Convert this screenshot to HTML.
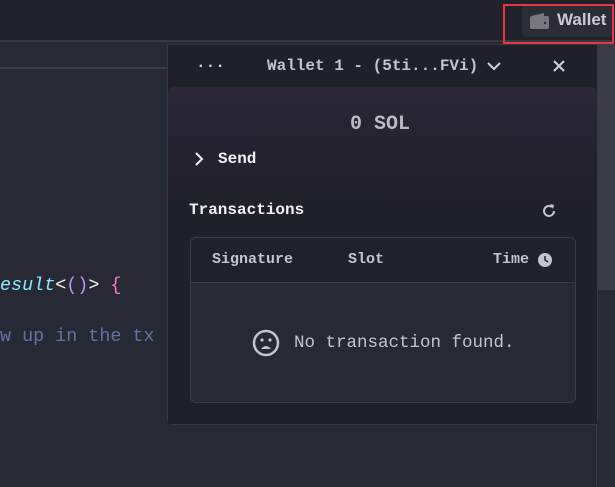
<!DOCTYPE html>
<html><head><style>
*{margin:0;padding:0;box-sizing:border-box}
body{width:615px;height:487px;background:#272935;position:relative;overflow:hidden;font-family:"Liberation Mono",monospace;}
.top{position:absolute;left:0;top:0;width:615px;height:42px;background:#21222c;border-bottom:2px solid #363845}
.tabline{position:absolute;left:0;top:67px;width:170px;height:2px;background:#3a3c4a}
.btn{position:absolute;left:522px;top:4px;width:93px;height:33px;background:#2b2c37;border-radius:5px;color:#c9cad4;font:bold 17px "Liberation Sans",sans-serif;}
.red{position:absolute;left:503px;top:4px;width:111px;height:40px;border:2px solid #e5383e}
.scroll{position:absolute;left:598px;top:44px;width:17px;height:246px;background:#3a3b45}
.vline{position:absolute;left:596px;top:290px;width:1px;height:197px;background:#3a3b45}
.panel{position:absolute;left:167px;top:44px;width:431px;height:381px;background:#1f2029;border:1px solid #363845;border-radius:0 0 6px 6px}
.inner{position:absolute;left:0;top:42px;width:429px;height:337px;border-radius:6px 6px 0 0;background:linear-gradient(#2b2737 0px,#22212c 90px,#1f2029 150px)}
.t{position:absolute;white-space:nowrap}
.code{position:absolute;font-size:18.4px;white-space:nowrap}
.table{position:absolute;left:22px;top:192px;width:386px;height:166px;border:1px solid #3a3c4a;border-radius:6px;background:#272935;overflow:hidden}
.th{height:45px;background:#20212b;border-bottom:1px solid #3a3c4a;position:relative;color:#c3c4cf;font-weight:bold;font-size:15px}
</style></head><body>
<div class="top"></div>
<div class="tabline"></div>
<div class="btn">
<svg style="position:absolute;left:8px;top:8px" width="19" height="17" viewBox="0 0 19 17"><path d="M1 4 L14 1 L14 4 Z" fill="#77787f"/><rect x="0" y="4" width="19" height="13" rx="2" fill="#77787f"/><circle cx="15" cy="11" r="1.2" fill="#2b2c37"/></svg>
<span class="t" style="left:35px;top:6px">Wallet</span></div>
<div class="red"></div>
<div class="scroll"></div>
<div class="vline"></div>
<div class="code" style="left:0;top:275px;color:#8be9fd;font-style:italic">esult<span style="color:#f8f8f2;font-style:normal">&lt;</span><span style="color:#bd93f9;font-style:normal">()</span><span style="color:#f8f8f2;font-style:normal">&gt; </span><span style="color:#ff79c6;font-style:normal">{</span></div>
<div class="code" style="left:0;top:326px;color:#6272a4">w up in the tx</div>
<div class="panel">
<span class="t" style="left:28px;top:12px;color:#d0d1da;font-size:16px;font-weight:bold">···</span>
<span class="t" style="left:99px;top:12px;color:#c3c4cf;font-size:16px;font-weight:bold">Wallet 1 - (5ti...FVi)</span>
<svg style="position:absolute;left:318px;top:15px" width="16" height="12"><path d="M2 3 L8 9 L14 3" stroke="#d0d1da" stroke-width="2" fill="none"/></svg>
<svg style="position:absolute;left:384px;top:14px" width="14" height="14"><path d="M2 2 L12 12 M12 2 L2 12" stroke="#d0d1da" stroke-width="2"/></svg>
<div class="inner">
<span class="t" style="left:182px;top:26px;color:#b9bac4;font-size:20px;font-weight:bold">0 SOL</span>
<svg style="position:absolute;left:25px;top:64px" width="12" height="16"><path d="M3 2 L9 8 L3 14" stroke="#f0f0f4" stroke-width="2" fill="none"/></svg>
<span class="t" style="left:50px;top:63px;color:#f0f0f4;font-size:16px;font-weight:bold">Send</span>
<span class="t" style="left:21px;top:114px;color:#f0f0f4;font-size:16px;font-weight:bold">Transactions</span>
<svg style="position:absolute;left:373px;top:116px" width="16" height="16" viewBox="0 0 16 16"><path d="M13 8 A5 5 0 1 1 11 4" stroke="#c3c4cf" stroke-width="2" fill="none"/><path d="M9 1 L13 2 L12 6 Z" fill="#c3c4cf"/></svg>
<div class="table" style="top:150px">
<div class="th"><span class="t" style="left:21px;top:13px">Signature</span><span class="t" style="left:157px;top:13px">Slot</span><span class="t" style="left:302px;top:13px">Time</span>
<svg style="position:absolute;left:347px;top:15px" width="14" height="14"><circle cx="7" cy="7" r="7" fill="#c3c4cf"/><path d="M7 3 V7 L10 9" stroke="#20212b" stroke-width="1.5" fill="none"/></svg></div>
<svg style="position:absolute;left:61px;top:91px" width="28" height="28" viewBox="0 0 28 28"><circle cx="14" cy="14" r="12" stroke="#c3c4cf" stroke-width="2.5" fill="none"/><circle cx="10" cy="11" r="1.6" fill="#c3c4cf"/><circle cx="18" cy="11" r="1.6" fill="#c3c4cf"/><path d="M9 20 Q14 14 19 20 Z" fill="#c3c4cf"/></svg>
<span class="t" style="left:103px;top:95px;color:#c3c4cf;font-size:17.5px">No transaction found.</span>
</div>
</div>
</div>
</body></html>
